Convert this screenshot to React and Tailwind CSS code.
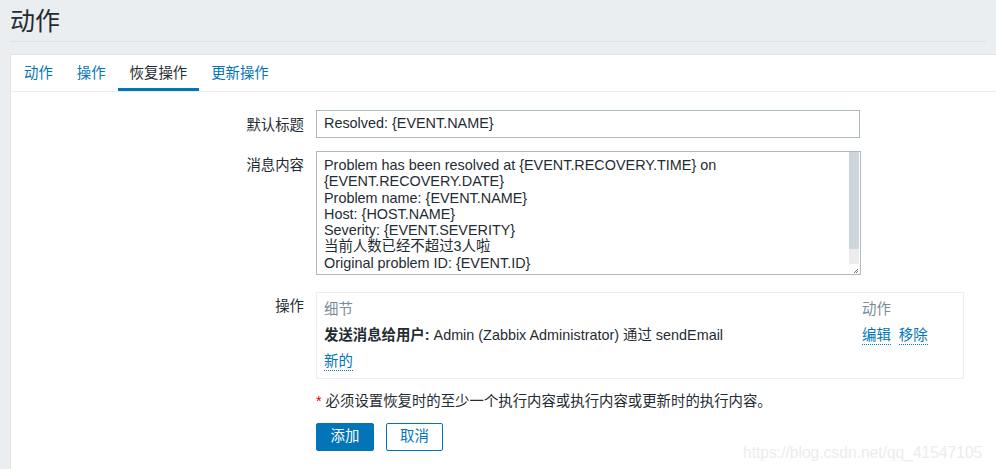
const font = "font-['Liberation_Sans','Noto_Sans_CJK_SC',sans-serif]"

const lines = [
  'Problem has been resolved at {EVENT.RECOVERY.TIME} on',
  '{EVENT.RECOVERY.DATE}',
  'Problem name: {EVENT.NAME}',
  'Host: {HOST.NAME}',
  'Severity: {EVENT.SEVERITY}',
  '当前人数已经不超过3人啦',
  'Original problem ID: {EVENT.ID}',
]

function Tab({ label, active }) {
  return (
    <div
      className={
        'h-[36px] pt-[5px] px-[12px] flex items-center border-b-[3px] ' +
        (active ? 'border-[#0275b8] text-[#1f2c33]' : 'border-transparent text-[#0275b8]')
      }
    >
      {label}
    </div>
  )
}

function Row({ label, children, labelClass = '' }) {
  return (
    <div className="flex">
      <div className={'w-[305px] shrink-0 pr-[12px] text-right text-[#1f2c33] ' + labelClass}>{label}</div>
      <div className="flex-1">{children}</div>
    </div>
  )
}

function DotLink({ children }) {
  return <span className="text-[#0275b8] border-b border-dotted border-[#0275b8] leading-[17px]">{children}</span>
}

export default function App() {
  return (
    <div className={`${font} relative w-[996px] h-[469px] overflow-hidden bg-[#ebeef1] text-[14.4px] text-[#1f2c33]`}>
      <div className="mx-[10px] h-[42px] border-b border-[#dde2e6] flex items-center">
        <h1 className="text-[25px] leading-none text-[#1f2c33] mt-[1px]">动作</h1>
      </div>

      <div className="ml-[10px] mt-[12px] bg-white border-l border-t border-[#dfe4e7] h-[420px]">
        <div className="flex pl-[1px] border-b border-[#ebeef0]">
          <Tab label="动作" />
          <Tab label="操作" />
          <Tab label="恢复操作" active />
          <Tab label="更新操作" />
        </div>

        <div className="pt-[18px]">
          <Row label="默认标题" labelClass="pt-[5px]">
            <div className="w-[544px] h-[28px] border border-[#acbbc2] px-[7px] flex items-center">
              Resolved: {'{EVENT.NAME}'}
            </div>
          </Row>

          <div className="h-[13px]" />

          <Row label="消息内容" labelClass="pt-[4px]">
            <div className="w-[545px] h-[124px] border border-[#acbbc2] flex">
              <div className="flex-1 pl-[7px] pt-[5px] leading-[16.3px]">
                {lines.map((l) => (
                  <div key={l}>{l}</div>
                ))}
              </div>
              <div className="w-[10px] mr-[1px] flex flex-col">
                <div className="h-[97px] bg-[#cdd6dc]" />
                <div className="flex-1 bg-[#ececec]" />
                <div className="h-[10px] bg-white flex items-end justify-end">
                  <svg width="6" height="6" viewBox="0 0 6 6">
                    <path d="M5 1 L1 5 M5 3 L3 5" stroke="#777" strokeWidth="1" />
                  </svg>
                </div>
              </div>
            </div>
          </Row>

          <div className="h-[17px]" />

          <Row label="操作" labelClass="pt-[4px]">
            <div className="w-[648px] border border-[#ebeef0] px-[7px] pt-[4px] pb-[3px]">
              <div className="h-[26px] flex items-center text-[#768d99]">
                <div className="flex-1">细节</div>
                <div className="w-[94px]">动作</div>
              </div>
              <div className="h-[26px] flex items-center">
                <div className="flex-1">
                  <span className="font-bold">发送消息给用户:</span> Admin (Zabbix Administrator) 通过 sendEmail
                </div>
                <div className="w-[94px] flex gap-[8px]">
                  <DotLink>编辑</DotLink>
                  <DotLink>移除</DotLink>
                </div>
              </div>
              <div className="h-[26px] flex items-center">
                <DotLink>新的</DotLink>
              </div>
            </div>
          </Row>

          <div className="h-[14px]" />

          <Row label="">
            <div className="leading-[16px]">
              <span className="text-[#dc0000]">*</span> 必须设置恢复时的至少一个执行内容或执行内容或更新时的执行内容。
            </div>
            <div className="flex gap-[12px] mt-[14px]">
              <button className="w-[58px] h-[28px] rounded-[2px] bg-[#0275b8] text-white border border-[#0275b8]">
                添加
              </button>
              <button className="w-[57px] h-[28px] rounded-[2px] bg-white text-[#0275b8] border border-[#0275b8]">
                取消
              </button>
            </div>
          </Row>
        </div>
      </div>

      <div className="absolute left-[743px] top-[441px] text-[15.6px] text-[#ececec]">
        https://blog.csdn.net/qq_41547105
      </div>
    </div>
  )
}
